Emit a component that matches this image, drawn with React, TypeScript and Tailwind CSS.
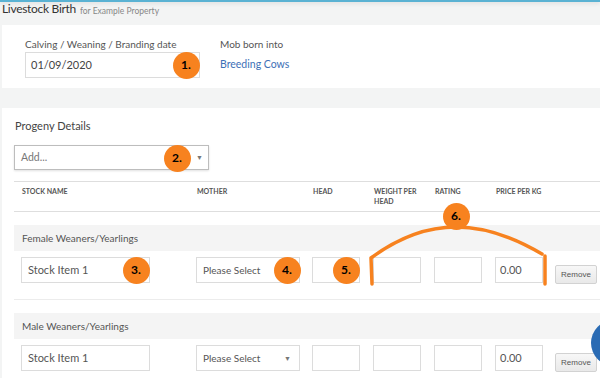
import React from 'react';

// Column layout for the progeny table (x positions measured from the table's left edge)
const COLS = ['w-[175px]', 'w-[116px]', 'w-[61px]', 'w-[61px]', 'w-[61px]', 'w-[60px]'];

function Badge({ n, x, y }: { n: number; x: number; y: number }) {
  return (
    <div
      className="absolute flex h-[27px] w-[27px] items-center justify-center rounded-full bg-[#f7821f] text-[12px] font-bold text-black"
      style={{ left: x - 13.5, top: y - 13.5 }}
    >
      {n}.
    </div>
  );
}

function TextBox({ value, w, className = '' }: { value?: string; w: string; className?: string }) {
  return (
    <div
      className={`flex h-[26px] ${w} items-center border border-[#dcdcdc] bg-white px-[6px] text-[11px] text-[#555] ${className}`}
    >
      {value}
    </div>
  );
}

// the arrow of the first row's select sits under badge 4, so it can be left out there
function SelectBox({ value, arrow = true }: { value: string; arrow?: boolean }) {
  return (
    <div className="flex h-[26px] w-[104px] items-center justify-between border border-[#dcdcdc] bg-white pl-[6px] pr-[8px] text-[10px] text-[#555]">
      <span>{value}</span>
      {arrow && <span className="text-[7px] text-[#777]">▼</span>}
    </div>
  );
}

function RemoveButton() {
  return (
    <div className="mt-[8px] flex h-[19px] w-[42px] items-center justify-center rounded-[2px] border border-[#d2d2d2] bg-gradient-to-b from-[#f7f7f7] to-[#e9e9e9] font-['Liberation_Sans'] text-[8px] text-[#555]">
      Remove
    </div>
  );
}

function Group({ title, arrow = true }: { title: string; arrow?: boolean }) {
  return (
    <div className="mt-[13px] border-b border-[#ececec]">
      <div className="flex h-[26px] items-center bg-[#f4f4f4] pl-[8px] text-[10px] text-[#555]">{title}</div>
      <div className="flex pb-[15px] pt-[6px]">
        <div className={`${COLS[0]} pl-[7px]`}>
          <TextBox value="Stock Item 1" w="w-[129px]" />
        </div>
        <div className={`${COLS[1]} pl-[7px]`}>
          <SelectBox value="Please Select" arrow={arrow} />
        </div>
        <div className={`${COLS[2]} pl-[7px]`}>
          <TextBox w="w-[48px]" />
        </div>
        <div className={`${COLS[3]} pl-[7px]`}>
          <TextBox w="w-[48px]" />
        </div>
        <div className={`${COLS[4]} pl-[7px]`}>
          <TextBox w="w-[48px]" />
        </div>
        <div className={`${COLS[5]} pl-[7px]`}>
          <TextBox value="0.00" w="w-[48px]" className="pl-[4px]" />
        </div>
        <div className="pl-[7px]">
          <RemoveButton />
        </div>
      </div>
    </div>
  );
}

export default function App() {
  const headers = ['Stock Name', 'Mother', 'Head', 'Weight per head', 'Rating', 'Price per kg'];

  return (
    <div className="relative h-[378px] w-[600px] overflow-hidden bg-[#f3f4f4] font-['Lato'] text-[#444]">
      {/* top accent line */}
      <div className="h-[2px] bg-[#5ab2d3] shadow-[0_1px_4px_rgba(0,0,0,0.15)]" />

      <div className="flex h-[23px] items-start pl-[2px] leading-[13px]">
        <span className="text-[12px] tracking-[-0.3px] text-[#333]">Livestock Birth</span>
        <span className="ml-[4px] mt-[3px] text-[8.5px] text-[#888]">for Example Property</span>
      </div>

      {/* date / mob card */}
      <div className="ml-[2px] flex h-[63px] gap-[20px] bg-white pl-[23px] pt-[12px]">
        <div>
          <div className="text-[10px] leading-[14px] text-[#555]">Calving / Weaning / Branding date</div>
          <div className="mt-[1px] flex h-[26px] w-[175px] items-center border border-[#dcdcdc] px-[5px] text-[11px] text-[#444]">
            01/09/2020
          </div>
        </div>
        <div>
          <div className="text-[10px] leading-[14px] text-[#555]">Mob born into</div>
          <div className="mt-[6px] text-[10.5px] text-[#3d6fb6]">Breeding Cows</div>
        </div>
      </div>

      {/* progeny card */}
      <div className="ml-[2px] mt-[20px] bg-white pl-[12px] pt-[10px]">
        <div className="pl-[1px] text-[11px] leading-[16px] text-[#444]">Progeny Details</div>
        <div className="mt-[11px] flex h-[25px] w-[195px] items-center justify-between border border-[#bdbdbd] bg-white pl-[6px] pr-[5px] text-[10.5px] text-[#777] shadow-[0_1px_2px_rgba(0,0,0,0.12)]">
          <span>Add...</span>
          <span className="text-[7px] text-[#777]">▼</span>
        </div>

        <div className="mt-[11px]">
          <div className="flex h-[31px] border-y border-[#dedede] pt-[4px] text-[7px] font-bold uppercase leading-[10px] text-[#555]">
            {headers.map((h, i) => (
              <div key={h} className={`${COLS[i]} pl-[8px] pr-[6px]`}>
                {h}
              </div>
            ))}
          </div>
          <Group title="Female Weaners/Yearlings" arrow={false} />
          <Group title="Male Weaners/Yearlings" />
        </div>
      </div>

      {/* floating help button, partly off screen */}
      <div className="absolute left-[591px] top-[320px] h-[46px] w-[46px] rounded-full bg-[#2a6bb4]" />

      {/* annotations */}
      <svg className="absolute left-0 top-0" width="600" height="378" fill="none">
        <path
          d="M372 284 L371 258 C398 238 425 227 456 227 C487 227 515 238 542 254 M545 256 L545 284"
          stroke="#f7821f"
          strokeWidth="3.5"
          strokeLinecap="round"
          strokeLinejoin="round"
        />
      </svg>
      <Badge n={1} x={186} y={65} />
      <Badge n={2} x={177} y={158} />
      <Badge n={3} x={136} y={270} />
      <Badge n={4} x={287} y={270} />
      <Badge n={5} x={346} y={270} />
      <Badge n={6} x={456} y={216} />
    </div>
  );
}
